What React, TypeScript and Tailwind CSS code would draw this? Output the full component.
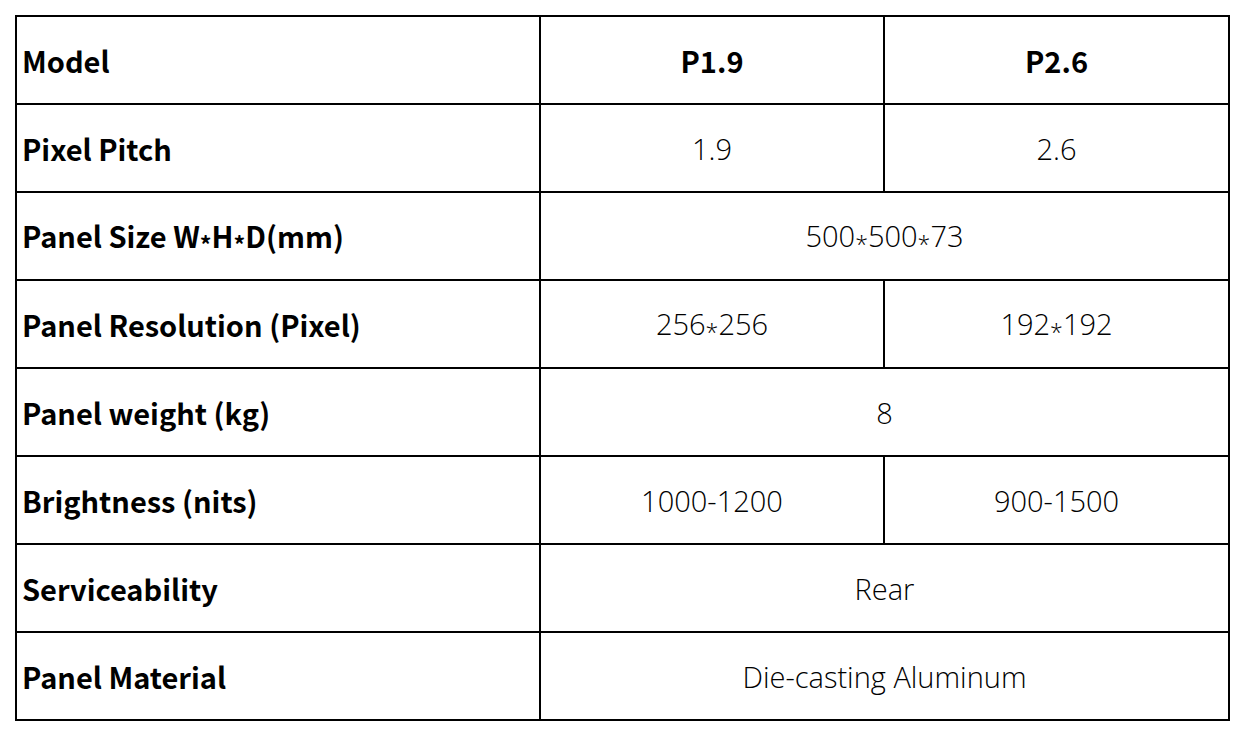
const ROWS: { label: string; cells: { text: string; span?: number; bold?: boolean }[] }[] = [
  { label: 'Model', cells: [{ text: 'P1.9', bold: true }, { text: 'P2.6', bold: true }] },
  { label: 'Pixel Pitch', cells: [{ text: '1.9' }, { text: '2.6' }] },
  { label: 'Panel Size W*H*D(mm)', cells: [{ text: '500*500*73', span: 2 }] },
  { label: 'Panel Resolution (Pixel)', cells: [{ text: '256*256' }, { text: '192*192' }] },
  { label: 'Panel weight (kg)', cells: [{ text: '8', span: 2 }] },
  { label: 'Brightness (nits)', cells: [{ text: '1000-1200' }, { text: '900-1500' }] },
  { label: 'Serviceability', cells: [{ text: 'Rear', span: 2 }] },
  { label: 'Panel Material', cells: [{ text: 'Die-casting Aluminum', span: 2 }] },
];

function Stars({ text }: { text: string }) {
  const parts = text.split('*');
  return (
    <>
      {parts.map((p, i) => (
        <span key={i}>
          {p}
          {i < parts.length - 1 && <span className="relative top-[6px] text-[0.8em]">*</span>}
        </span>
      ))}
    </>
  );
}

export default function App() {
  return (
    <div className="min-h-[736px] w-[1244px] bg-white pl-[15px] pt-[15px] font-['Noto_Sans_CJK_SC','Noto_Sans',sans-serif] text-black">
      <table className="w-[1213px] table-fixed border-collapse border-2 border-black">
        <colgroup>
          <col className="w-[524px]" />
          <col className="w-[344px]" />
          <col className="w-[345px]" />
        </colgroup>
        <tbody>
          {ROWS.map((row) => (
            <tr key={row.label} className="h-[88px]">
              <td className="border-2 border-black pl-[5px] text-[29px] font-bold leading-none">
                <Stars text={row.label} />
              </td>
              {row.cells.map((c) => (
                <td
                  key={c.text}
                  colSpan={c.span ?? 1}
                  className={
                    c.bold
                      ? 'border-2 border-black text-center text-[29px] font-bold leading-none'
                      : "border-2 border-black text-center font-['Open_Sans',sans-serif] text-[29px] font-light leading-none"
                  }
                >
                  <Stars text={c.text} />
                </td>
              ))}
            </tr>
          ))}
        </tbody>
      </table>
    </div>
  );
}
